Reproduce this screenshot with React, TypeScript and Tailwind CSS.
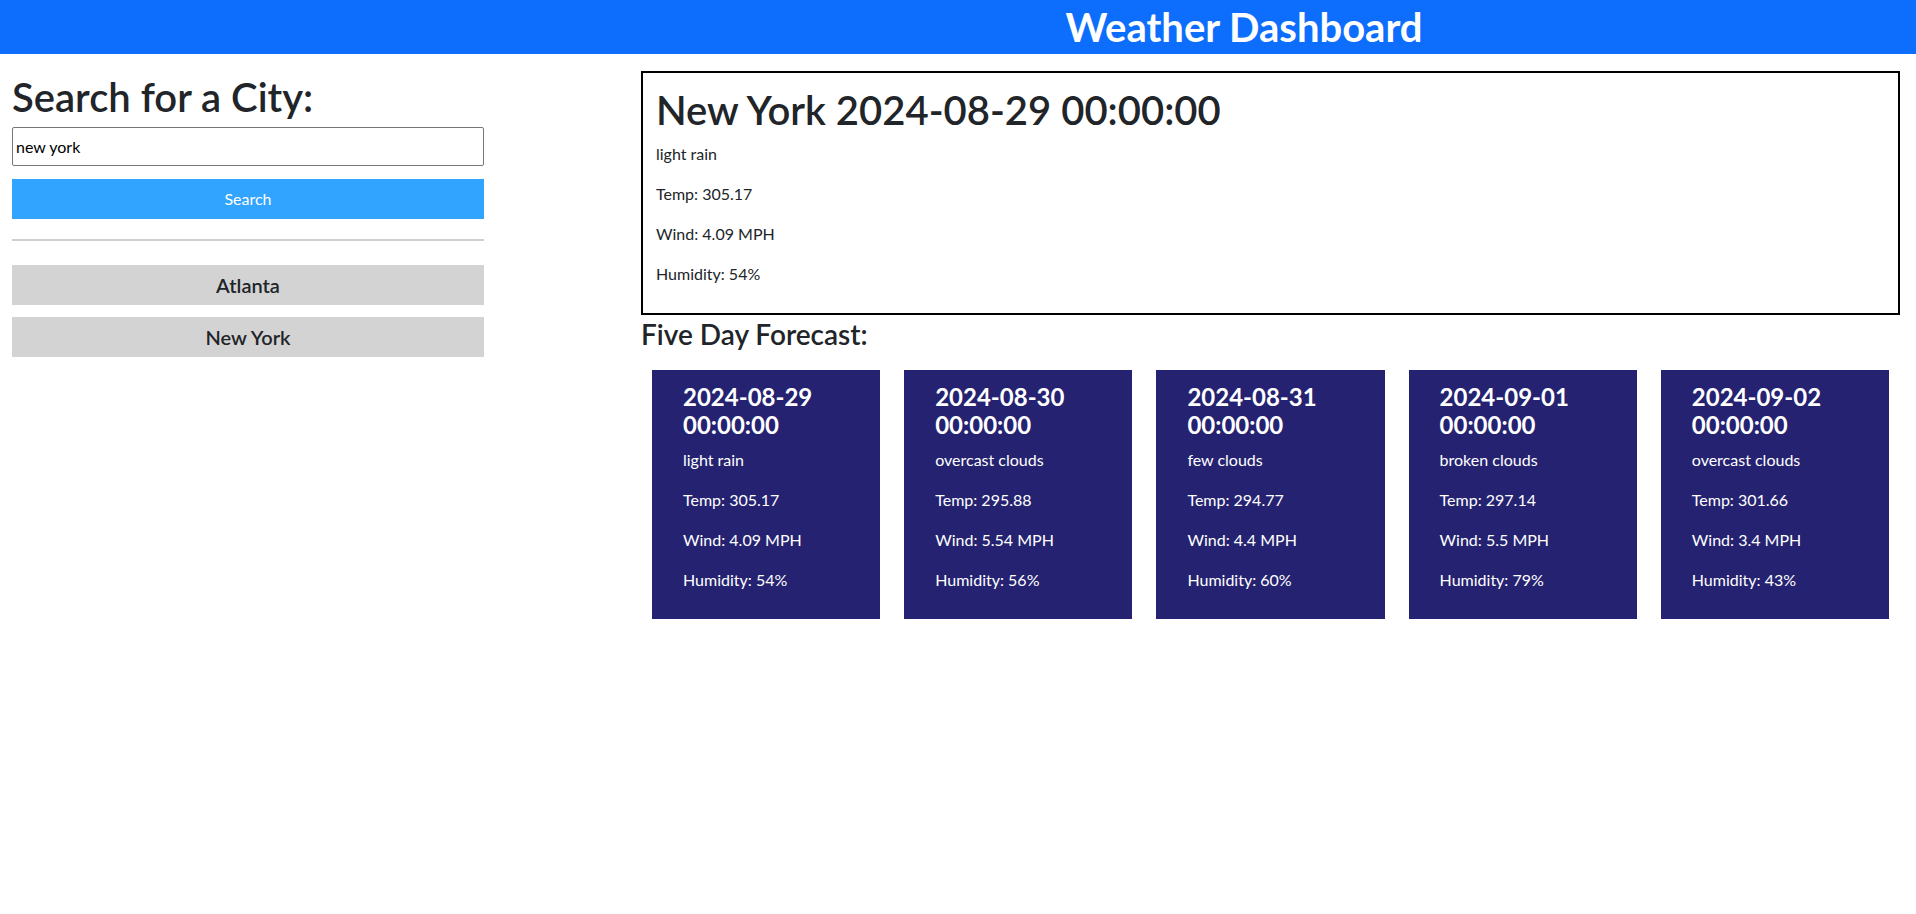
import React, { useState } from "react";

type Forecast = {
  date: string;
  desc: string;
  temp: string;
  wind: string;
  humidity: string;
};

const forecast: Forecast[] = [
  { date: "2024-08-29 00:00:00", desc: "light rain", temp: "305.17", wind: "4.09", humidity: "54" },
  { date: "2024-08-30 00:00:00", desc: "overcast clouds", temp: "295.88", wind: "5.54", humidity: "56" },
  { date: "2024-08-31 00:00:00", desc: "few clouds", temp: "294.77", wind: "4.4", humidity: "60" },
  { date: "2024-09-01 00:00:00", desc: "broken clouds", temp: "297.14", wind: "5.5", humidity: "79" },
  { date: "2024-09-02 00:00:00", desc: "overcast clouds", temp: "301.66", wind: "3.4", humidity: "43" },
];

const history = ["Atlanta", "New York"];

const App = () => {
  const [city, setCity] = useState<string>("new york");

  return (
    <div className="min-h-screen bg-white text-[#212529] font-['Lato','Noto_Sans',sans-serif]">
      <header className="h-[54px] bg-[#0d6efd] flex items-center justify-center pl-[572px]">
        <h1 className="text-[40px] leading-[1.2] font-bold text-white">Weather Dashboard</h1>
      </header>

      <main className="flex">
        {/* search side */}
        <aside className="w-[472px] ml-3 mt-[19px] flex flex-col">
          <h2 className="text-[40px] leading-[1.2] font-semibold mb-[6px]">Search for a City:</h2>
          <input
            value={city}
            onChange={(e) => setCity(e.target.value)}
            className="h-[39px] border border-[#767676] rounded-[2px] px-[3px] text-base text-black outline-none"
          />
          <button className="mt-[13px] h-[40px] bg-[#31a4ff] text-white text-base">Search</button>
          <hr className="mt-[20px] border-t-2 border-[#cfcfcf]" />
          <div className="mt-[24px] flex flex-col gap-[12px]">
            {history.map((name, i) => (
              <button key={i} className="h-[40px] bg-[#d3d3d3] text-[20px] font-semibold text-[#212529]">
                {name}
              </button>
            ))}
          </div>
        </aside>

        {/* weather side */}
        <section className="flex-1 ml-[157px] mr-4 mt-[17px]">
          <div className="border-2 border-black px-[13px] pt-[13px] pb-[11px]">
            <h2 className="text-[40px] leading-[1.2] font-semibold mb-2">New York 2024-08-29 00:00:00</h2>
            <p className="leading-6 mb-4">light rain</p>
            <p className="leading-6 mb-4">Temp: 305.17</p>
            <p className="leading-6 mb-4">Wind: 4.09 MPH</p>
            <p className="leading-6 mb-4">Humidity: 54%</p>
          </div>

          <h3 className="mt-[3px] text-[28px] leading-[1.2] font-semibold mb-2">Five Day Forecast:</h3>

          <div className="mt-[18px] px-[11px] grid grid-cols-5 gap-6">
            {forecast.map((day, i) => (
              <div key={i} className="bg-[#252371] text-white pl-[31px] pr-3 pt-[13px] pb-[11px]">
                <h4 className="text-[24px] leading-[1.2] font-bold mb-2">{day.date}</h4>
                <p className="leading-6 mb-4">{day.desc}</p>
                <p className="leading-6 mb-4">Temp: {day.temp}</p>
                <p className="leading-6 mb-4">Wind: {day.wind} MPH</p>
                <p className="leading-6 mb-4">Humidity: {day.humidity}%</p>
              </div>
            ))}
          </div>
        </section>
      </main>
    </div>
  );
};

export default App;
